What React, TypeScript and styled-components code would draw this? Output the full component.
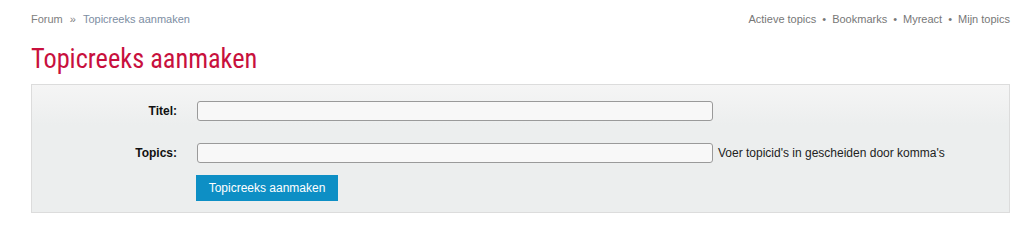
import React from 'react';
import styled, { createGlobalStyle } from 'styled-components';

const GlobalStyle = createGlobalStyle`
  html, body {
    margin: 0;
    padding: 0;
    background: #fff;
  }
  body {
    font-family: "Liberation Sans", Arial, sans-serif;
    font-size: 12px;
    color: #222;
  }
`;

const Page = styled.div`
  padding: 12px 22px 0 31px;
`;

const TopBar = styled.div`
  display: flex;
  justify-content: space-between;
  align-items: center;
  height: 14px;
  line-height: 14px;
  font-size: 11px;
`;

const Crumbs = styled.div`
  display: flex;
  gap: 7px;
  color: #808080;
`;

const CrumbLink = styled.a<{ $current?: boolean }>`
  color: ${p => (p.$current ? '#7d8ea3' : '#808080')};
  text-decoration: none;
`;

const NavLinks = styled.div`
  display: flex;
  gap: 6px;
  color: #777;
`;

const NavLink = styled.a`
  color: #777;
  text-decoration: none;
`;

const Title = styled.h1`
  margin: 18px 0 0 0;
  height: 40px;
  font-family: "Roboto Condensed", "Liberation Sans Narrow", Roboto, sans-serif;
  font-weight: 400;
  font-size: 28px;
  line-height: 30px;
  color: #c8103d;
  transform: scaleX(0.94);
  transform-origin: left center;
  white-space: nowrap;
`;

const Panel = styled.form`
  border: 1px solid #dcdcdc;
  background: linear-gradient(#f5f5f5, #eceeee 40px);
  padding: 16px 0 11px 0;
  display: flex;
  flex-direction: column;
  gap: 22px;
`;

const Row = styled.div`
  display: flex;
  align-items: center;
`;

const Label = styled.label`
  width: 145px;
  text-align: right;
  font-weight: bold;
  color: #111;
  margin-right: 20px;
`;

const Input = styled.input`
  box-sizing: border-box;
  width: 516px;
  height: 20px;
  border: 1px solid #9a9a9a;
  border-radius: 3px;
  background: #f8f8f8;
  margin: 0;
  padding: 0 4px;
  font: inherit;
`;

const Hint = styled.span`
  margin-left: 5px;
  color: #222;
`;

const Actions = styled.div`
  padding-left: 164px;
  margin-top: -10px;
`;

const Button = styled.button`
  height: 26px;
  width: 142px;
  border: none;
  background: #0d8fc5;
  color: #fff;
  font-family: "Liberation Sans", Arial, sans-serif;
  font-size: 12px;
  padding: 0;
  cursor: pointer;
`;

const navItems = ['Actieve topics', 'Bookmarks', 'Myreact', 'Mijn topics'];

const App: React.FC = () => {
  return (
    <>
      <GlobalStyle />
      <Page>
        <TopBar>
          <Crumbs>
            <CrumbLink href="#">Forum</CrumbLink>
            <span>»</span>
            <CrumbLink href="#" $current>Topicreeks aanmaken</CrumbLink>
          </Crumbs>
          <NavLinks>
            {navItems.map((item, i) => (
              <React.Fragment key={item}>
                {i > 0 && <span>•</span>}
                <NavLink href="#">{item}</NavLink>
              </React.Fragment>
            ))}
          </NavLinks>
        </TopBar>
        <Title>Topicreeks aanmaken</Title>
        <Panel onSubmit={e => e.preventDefault()}>
          <Row>
            <Label htmlFor="titel">Titel:</Label>
            <Input id="titel" type="text" />
          </Row>
          <Row>
            <Label htmlFor="topics">Topics:</Label>
            <Input id="topics" type="text" />
            <Hint>Voer topicid's in gescheiden door komma's</Hint>
          </Row>
          <Actions>
            <Button type="submit">Topicreeks aanmaken</Button>
          </Actions>
        </Panel>
      </Page>
    </>
  );
};

export default App;
